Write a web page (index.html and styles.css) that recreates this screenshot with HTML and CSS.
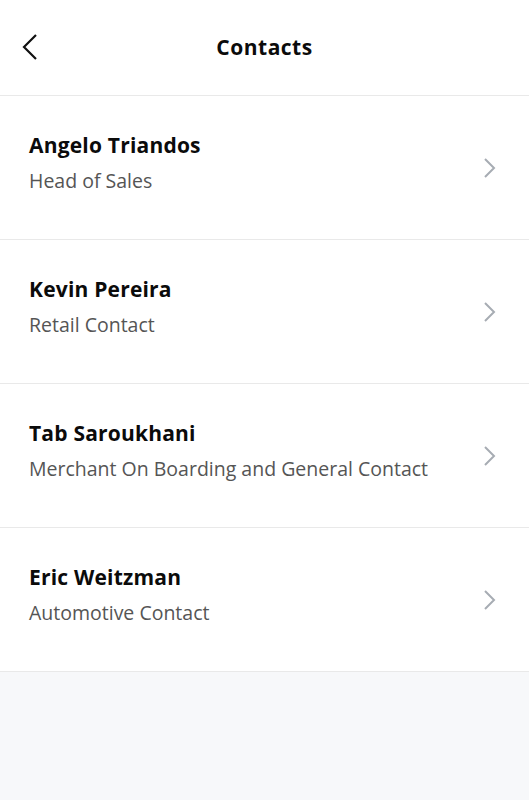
FILE: index.html
```html
<!DOCTYPE html>
<html>
<head>
<meta charset="utf-8">
<link rel="stylesheet" href="styles.css">
</head>
<body>
<div class="app">
  <header class="topbar">
    <button class="back" aria-label="Back">
      <svg width="18" height="28" viewBox="0 0 18 28"><path d="M16 2 L4 14 L16 26" fill="none" stroke="#111" stroke-width="2.2"/></svg>
    </button>
    <h1 class="title">Contacts</h1>
  </header>
  <ul class="list">
    <li class="row">
      <div class="info"><div class="name">Angelo Triandos</div><div class="role">Head of Sales</div></div>
      <svg class="chev" width="14" height="22" viewBox="0 0 14 22"><path d="M2 2 L11 11 L2 20" fill="none" stroke="#a7acb3" stroke-width="2"/></svg>
    </li>
    <li class="row">
      <div class="info"><div class="name">Kevin Pereira</div><div class="role">Retail Contact</div></div>
      <svg class="chev" width="14" height="22" viewBox="0 0 14 22"><path d="M2 2 L11 11 L2 20" fill="none" stroke="#a7acb3" stroke-width="2"/></svg>
    </li>
    <li class="row">
      <div class="info"><div class="name">Tab Saroukhani</div><div class="role">Merchant On Boarding and General Contact</div></div>
      <svg class="chev" width="14" height="22" viewBox="0 0 14 22"><path d="M2 2 L11 11 L2 20" fill="none" stroke="#a7acb3" stroke-width="2"/></svg>
    </li>
    <li class="row">
      <div class="info"><div class="name">Eric Weitzman</div><div class="role">Automotive Contact</div></div>
      <svg class="chev" width="14" height="22" viewBox="0 0 14 22"><path d="M2 2 L11 11 L2 20" fill="none" stroke="#a7acb3" stroke-width="2"/></svg>
    </li>
  </ul>
</div>
</body>
</html>
```
FILE: styles.css
```css
* { box-sizing: border-box; }
html, body { margin: 0; padding: 0; }
body {
  background: #f7f8fa;
  font-family: "Open Sans", "Noto Sans", sans-serif;
  width: 529px;
  min-height: 800px;
}
.topbar {
  height: 96px;
  background: #fff;
  border-bottom: 1px solid #e9e9e9;
  display: flex;
  align-items: center;
  justify-content: center;
  position: relative;
}
.back {
  position: absolute;
  left: 20px;
  top: 33px;
  background: none;
  border: 0;
  padding: 0;
  width: 18px;
  height: 28px;
  display: block;
}
.back svg { display: block; }
.title {
  margin: 0 0 2px;
  font-size: 21px;
  font-weight: 700;
  letter-spacing: 0.5px;
  color: #0b0b0b;
}
.list { list-style: none; margin: 0; padding: 0; background: #fff; }
.row {
  height: 144px;
  border-bottom: 1px solid #e9e9e9;
  display: flex;
  align-items: center;
  padding: 0 32px 0 29px;
}
.info { flex: 1; display: flex; flex-direction: column; gap: 10px; padding-bottom: 10px; }
.name { font-size: 21px; font-weight: 700; letter-spacing: 0.2px; color: #0b0b0b; line-height: 25px; }
.role { font-size: 19.5px; color: #555; line-height: 25px; }
.chev { display: block; }
```
